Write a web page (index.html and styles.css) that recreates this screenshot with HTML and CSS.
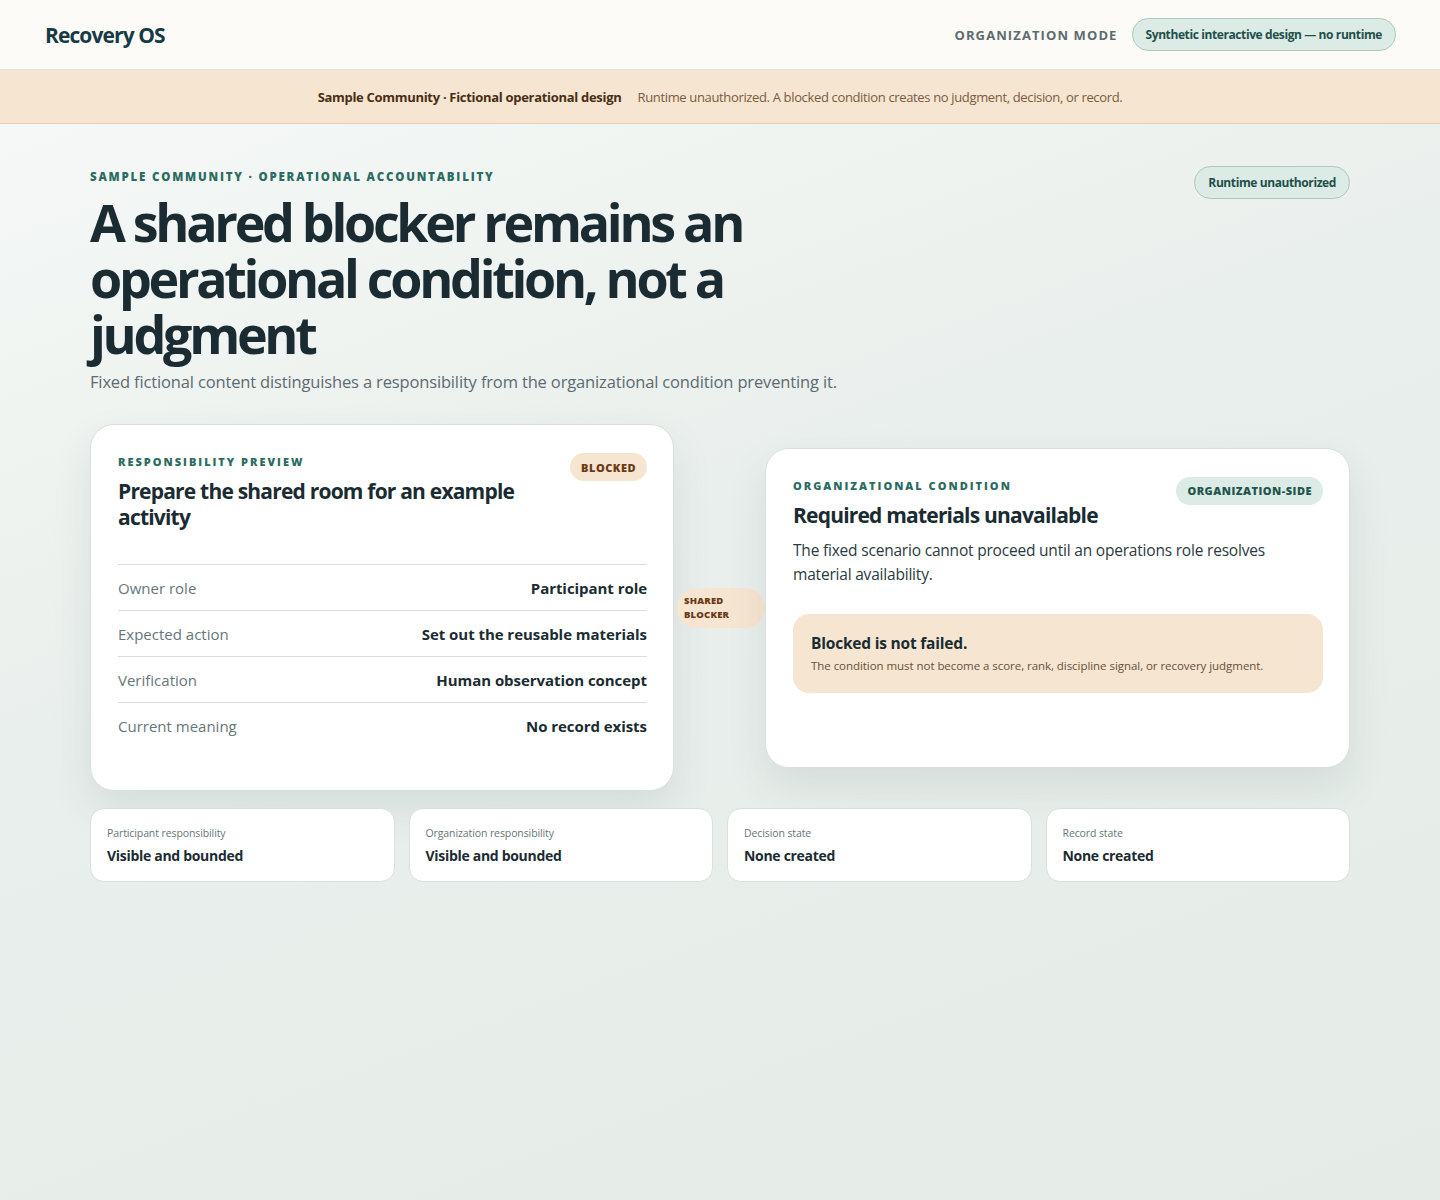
FILE: index.html
```html
<!DOCTYPE html>
<html lang="en">
<head>
<meta charset="utf-8">
<title>Recovery OS</title>
<link rel="stylesheet" href="styles.css">
</head>
<body>
<header class="topbar">
  <div class="brand">Recovery OS</div>
  <div class="mode">
    <span class="mode-label">ORGANIZATION MODE</span>
    <span class="pill pill-teal">Synthetic interactive design — no runtime</span>
  </div>
</header>
<div class="banner">
  <strong>Sample Community · Fictional operational design</strong>
  <span>Runtime unauthorized. A blocked condition creates no judgment, decision, or record.</span>
</div>
<main class="main">
  <section class="hero">
    <div class="hero-text">
      <div class="eyebrow">SAMPLE COMMUNITY · OPERATIONAL ACCOUNTABILITY</div>
      <h1>A shared blocker remains an operational condition, not a judgment</h1>
      <p class="lede">Fixed fictional content distinguishes a responsibility from the organizational condition preventing it.</p>
    </div>
    <span class="pill pill-teal pill-hero">Runtime unauthorized</span>
  </section>

  <section class="pair">
    <article class="card card-left">
      <div class="card-head">
        <div>
          <div class="eyebrow eyebrow-sm">RESPONSIBILITY PREVIEW</div>
          <h2 class="card-title title-narrow">Prepare the shared room for an example activity</h2>
        </div>
        <span class="badge badge-warm">BLOCKED</span>
      </div>
      <dl class="rows">
        <div class="row"><dt>Owner role</dt><dd>Participant role</dd></div>
        <div class="row"><dt>Expected action</dt><dd>Set out the reusable materials</dd></div>
        <div class="row"><dt>Verification</dt><dd>Human observation concept</dd></div>
        <div class="row"><dt>Current meaning</dt><dd>No record exists</dd></div>
      </dl>
    </article>

    <div class="link">
      <span class="link-pill">SHARED<br>BLOCKER</span>
    </div>

    <article class="card card-right">
      <div class="card-head">
        <div>
          <div class="eyebrow eyebrow-sm">ORGANIZATIONAL CONDITION</div>
          <h2 class="card-title">Required materials unavailable</h2>
        </div>
        <span class="badge badge-teal">ORGANIZATION-SIDE</span>
      </div>
      <p class="card-body">The fixed scenario cannot proceed until an operations role resolves material availability.</p>
      <div class="callout">
        <div class="callout-title">Blocked is not failed.</div>
        <div class="callout-text">The condition must not become a score, rank, discipline signal, or recovery judgment.</div>
      </div>
    </article>
  </section>

  <section class="stats">
    <div class="stat"><div class="stat-label">Participant responsibility</div><div class="stat-value">Visible and bounded</div></div>
    <div class="stat"><div class="stat-label">Organization responsibility</div><div class="stat-value">Visible and bounded</div></div>
    <div class="stat"><div class="stat-label">Decision state</div><div class="stat-value">None created</div></div>
    <div class="stat"><div class="stat-label">Record state</div><div class="stat-value">None created</div></div>
  </section>
</main>
</body>
</html>
```
FILE: styles.css
```css
* { box-sizing: border-box; }
html, body { margin: 0; padding: 0; }
body {
  font-family: "Open Sans", "Noto Sans", "Liberation Sans", sans-serif;
  color: #1b2d33;
  background: #e7eeeb;
  min-height: 1200px;
}
.topbar {
  height: 70px;
  background: #fcfbf8;
  border-bottom: 1px solid #dde3e0;
  display: flex;
  align-items: center;
  justify-content: space-between;
  padding: 0 44px 0 45px;
}
.brand {
  font-size: 21px;
  font-weight: 700;
  color: #173b46;
  letter-spacing: -0.9px;
}
.mode { display: flex; align-items: center; gap: 14px; }
.mode-label {
  font-size: 13px;
  font-weight: 700;
  letter-spacing: 1.1px;
  color: #5d6b6f;
}
.pill {
  display: inline-flex;
  align-items: center;
  border-radius: 999px;
  font-size: 12px;
  font-weight: 700;
}
.pill-teal {
  background: #dcebe6;
  border: 1px solid #a9c8be;
  color: #1f4f49;
  height: 33px;
  padding: 0 13px;
  letter-spacing: -0.4px;
}
.banner {
  height: 54px;
  background: #f6e5d1;
  border-bottom: 1px solid #e6cdb3;
  display: flex;
  align-items: center;
  justify-content: center;
  gap: 16px;
  font-size: 13px;
}
.banner strong { color: #4a2d15; font-weight: 700; letter-spacing: -0.3px; }
.banner span { color: #7c5a3d; letter-spacing: -0.35px; }
.main {
  background: linear-gradient(160deg, #f5f8f6 0%, #e9efec 40%, #e5ece8 100%);
  padding: 45px 90px 318px 90px;
}
.hero {
  display: flex;
  justify-content: space-between;
  align-items: flex-start;
}
.eyebrow {
  font-size: 11.5px;
  font-weight: 800;
  letter-spacing: 1.8px;
  color: #2b6c62;
}
h1 {
  margin: 10px 0 0 0;
  font-size: 52px;
  line-height: 56px;
  font-weight: 700;
  letter-spacing: -3.3px;
  color: #1a2c32;
  max-width: 780px;
}
.lede {
  margin: 8px 0 0 0;
  font-size: 16.5px;
  color: #5c6b70;
  letter-spacing: -0.15px;
}
.pill-hero { margin-top: -3px; }
.pair {
  margin-top: 31px;
  display: grid;
  grid-template-columns: 584px 91px 585px;
  align-items: center;
}
.card {
  background: #fff;
  border: 1px solid #d8e1de;
  border-radius: 24px;
  box-shadow: 0 18px 40px rgba(40, 70, 64, 0.10);
  padding: 27px 26px 27px 27px;
}
.card-left { padding-bottom: 42px; }
.card-right { padding-bottom: 74px; }
.card-head {
  display: flex;
  justify-content: space-between;
  align-items: flex-start;
  gap: 16px;
}
.eyebrow-sm { font-size: 11px; letter-spacing: 2px; margin-top: 2px; }
.card-title {
  margin: 9px 0 0 0;
  font-size: 21px;
  line-height: 26px;
  font-weight: 700;
  letter-spacing: -0.8px;
  color: #1a2c32;
}
.title-narrow { max-width: 420px; }
.badge {
  display: inline-flex;
  align-items: center;
  height: 28px;
  padding: 0 11px;
  border-radius: 999px;
  font-size: 11px;
  font-weight: 800;
  letter-spacing: 0.5px;
  white-space: nowrap;
}
.badge-warm { background: #f6e5d1; color: #6a3a14; }
.badge-teal { background: #dcebe6; color: #1f554c; }
.card-right .card-head .badge { margin-top: 1px; }
.card-left .card-head .badge { margin-top: 1px; }
.rows { margin: 34px 0 0 0; }
.row {
  display: flex;
  justify-content: space-between;
  align-items: center;
  height: 46px;
  border-top: 1px solid #d7dfdc;
}
.row dt { font-size: 15px; color: #66767a; letter-spacing: 0; }
.row dd { margin: 0; font-size: 15px; font-weight: 700; color: #1a2c32; letter-spacing: -0.05px; }
.link {
  display: flex;
  align-items: center;
  justify-content: center;
}
.link-pill {
  background: #f6e5d1;
  color: #6a3a14;
  font-size: 9.5px;
  font-weight: 800;
  line-height: 14px;
  letter-spacing: 0.2px;
  padding: 6px 30px 6px 7px;
  border-radius: 999px;
  width: 88px;
  margin-left: 3px;
}
.card-body {
  margin: 10px 0 0 0;
  font-size: 15.5px;
  line-height: 24px;
  color: #2a3a3f;
  letter-spacing: -0.2px;
}
.callout {
  margin-top: 28px;
  background: #f6e5d1;
  border-radius: 16px;
  padding: 18px 18px 20px 18px;
}
.callout-title { font-size: 15.5px; font-weight: 700; color: #1a2c32; letter-spacing: -0.2px; }
.callout-text { margin-top: 4px; font-size: 11.5px; color: #6b4f36; letter-spacing: -0.05px; }
.stats {
  margin-top: 17px;
  display: grid;
  grid-template-columns: repeat(4, 1fr);
  gap: 14px;
}
.stat {
  background: #fff;
  border: 1px solid #d8e1de;
  border-radius: 14px;
  padding: 17px 16px 16px 16px;
  height: 74px;
}
.stat-label { font-size: 10.5px; color: #66767a; letter-spacing: -0.1px; }
.stat-value { margin-top: 6px; font-size: 14px; font-weight: 700; color: #1a2c32; letter-spacing: -0.3px; }
```
